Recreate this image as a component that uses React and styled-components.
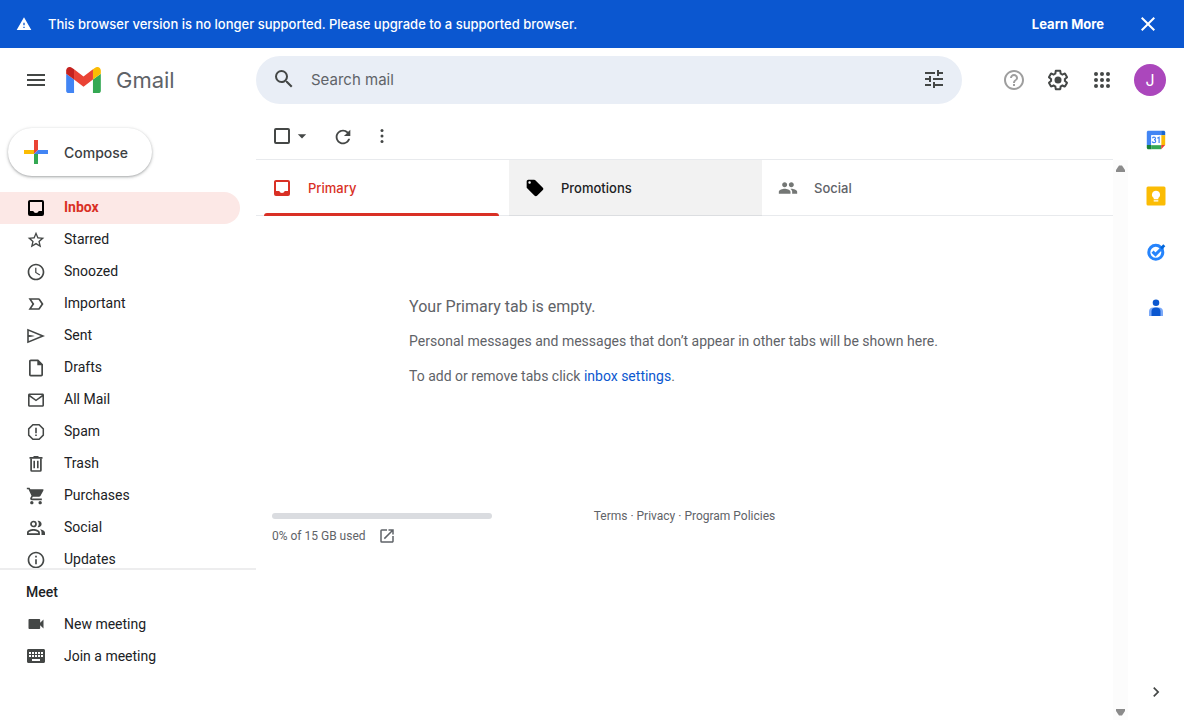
import React from "react";
import styled, { createGlobalStyle, css } from "styled-components";
import {
  MdMenu,
  MdSearch,
  MdTune,
  MdHelpOutline,
  MdClose,
  MdWarning,
  MdRefresh,
  MdArrowDropDown,
  MdStarOutline,
  MdSchedule,
  MdLabelImportantOutline,
  MdShoppingCart,
  MdPeople,
  MdInfoOutline,
  MdVideocam,
  MdLocalOffer,
  MdOpenInNew,
  MdChevronRight,
} from "react-icons/md";

const GlobalStyle = createGlobalStyle`
  *, *::before, *::after { box-sizing: border-box; }
  body {
    margin: 0;
    background: #fff;
    color: #202124;
    font-family: Roboto, "Liberation Sans", sans-serif;
    font-size: 14px;
  }
  button, input { font: inherit; color: inherit; }
  button { padding: 0; border: 0; background: none; cursor: pointer; }
  a { color: inherit; text-decoration: none; }
  svg { display: block; flex: none; }
`;

const display = `Inter, "Open Sans", sans-serif`;

const Page = styled.div`
  display: flex;
  flex-direction: column;
  height: 100vh;
  overflow: hidden;
`;

const Banner = styled.div`
  display: flex;
  align-items: center;
  flex: none;
  height: 48px;
  padding: 0 24px 0 16px;
  gap: 16px;
  background: #0b57d0;
  color: #fff;
  font-family: ${display};
  font-weight: 500;
  font-size: 13px;
`;

const BannerText = styled.span`
  flex: 1;
`;

const BannerLink = styled.a`
  margin-right: 16px;
  font-weight: 700;
`;

const IconButton = styled.button`
  display: grid;
  place-items: center;
  width: ${(p) => p.$size || 24}px;
  height: ${(p) => p.$size || 24}px;
  color: ${(p) => p.$color || "#444746"};
`;

const Header = styled.header`
  display: flex;
  align-items: center;
  flex: none;
  height: 64px;
  padding-right: 18px;
`;

const Brand = styled.div`
  display: flex;
  align-items: center;
  flex: none;
  width: 256px;
  padding-left: 24px;
`;

const BrandLink = styled.a`
  display: flex;
  align-items: center;
  gap: 15px;
  margin-left: 18px;
  color: #5f6368;
  font-family: ${display};
  font-size: 22px;
`;

const SearchBox = styled.form`
  display: flex;
  align-items: center;
  flex: 0 1 706px;
  height: 48px;
  padding: 0 16px 2px;
  gap: 15px;
  border-radius: 24px;
  background: #e9eef6;
`;

const SearchInput = styled.input`
  flex: 1;
  min-width: 0;
  padding: 0;
  border: 0;
  outline: 0;
  background: none;
  font-family: ${display};
  font-size: 15px;
  &::placeholder { color: #5f6368; opacity: 1; }
`;

const HeaderActions = styled.div`
  display: flex;
  align-items: center;
  gap: 20px;
  margin-left: auto;
`;

const Avatar = styled.button`
  width: 32px;
  height: 32px;
  border-radius: 50%;
  background: #ab47bc;
  color: #fff;
  font-family: ${display};
  font-size: 16px;
`;

const Body = styled.div`
  display: flex;
  flex: 1;
  min-height: 0;
`;

const Sidebar = styled.aside`
  display: flex;
  flex-direction: column;
  flex: none;
  width: 256px;
`;

const ComposeButton = styled.button`
  display: flex;
  align-items: center;
  align-self: flex-start;
  flex: none;
  gap: 16px;
  height: 48px;
  margin: 16px 8px;
  padding: 0 24px 0 16px;
  border-radius: 24px;
  background: #fff;
  box-shadow: 0 1px 2px rgba(60, 64, 67, 0.3), 0 1px 3px 1px rgba(60, 64, 67, 0.15);
  color: #3c4043;
  font-family: ${display};
  font-weight: 500;
`;

const FolderNav = styled.nav`
  flex: 1;
  min-height: 0;
  overflow: hidden;
`;

const NavLink = styled.a`
  display: flex;
  align-items: center;
  gap: 18px;
  height: 32px;
  margin-right: 16px;
  padding-left: 26px;
  border-radius: 0 16px 16px 0;
  color: #444746;
  ${(p) =>
    p.$active &&
    css`
      background: #fce8e6;
      color: #000;
      font-weight: 700;
    `}
`;

const NavLabel = styled.span`
  padding-bottom: ${(p) => (p.$centered ? 0 : 2)}px;
  color: ${(p) => (p.$active ? "#d93025" : "#202124")};
`;

const MeetSection = styled.section`
  flex: none;
  padding: 6px 0 48px;
  border-top: 2px solid #ededee;
`;

const MeetTitle = styled.h2`
  margin: 0;
  padding-left: 26px;
  font-size: 14px;
  font-weight: 500;
  line-height: 32px;
`;

const Main = styled.main`
  display: flex;
  flex-direction: column;
  flex: 1;
  min-width: 0;
`;

const Toolbar = styled.div`
  display: flex;
  align-items: center;
  flex: none;
  height: 47px;
  padding-left: 18px;
`;

const SelectAll = styled.input`
  appearance: none;
  width: 16px;
  height: 16px;
  margin: 0;
  border: 2px solid #444746;
  border-radius: 2px;
`;

const ToolbarGroup = styled.div`
  display: flex;
  align-items: center;
  gap: ${(p) => p.$gap}px;
  margin-right: 20px;
`;

const Scroller = styled.div`
  display: flex;
  flex: 1;
  min-height: 0;
`;

const Content = styled.div`
  flex: 1;
  min-width: 0;
`;

const Tabs = styled.div`
  display: flex;
  height: 57px;
  border: solid #e8eaed;
  border-width: 1px 0;
`;

const tabColors = { active: "#d93025", hover: "#000", idle: "#747775" };
const tabTextColors = { active: "#d93025", hover: "#202124", idle: "#5f6368" };

const Tab = styled.button`
  position: relative;
  display: flex;
  align-items: center;
  flex: 0 1 253px;
  gap: 16px;
  height: 56px;
  padding: 0 16px;
  color: ${(p) => tabColors[p.$state]};
  font-family: ${display};
  font-weight: 500;
  font-size: 13px;
  ${(p) => p.$state === "hover" && css`background: rgba(32, 33, 36, 0.06);`}
  ${(p) =>
    p.$state === "active" &&
    css`
      &::after {
        content: "";
        position: absolute;
        left: 8px;
        right: 10px;
        bottom: 0;
        height: 3px;
        border-radius: 3px 3px 0 0;
        background: #d93025;
      }
    `}
`;

const TabLabel = styled.span`
  color: ${(p) => tabTextColors[p.$state]};
`;

const EmptyState = styled.section`
  display: flex;
  justify-content: center;
  padding: 73px 22px 114px 0;
  color: #5f6368;
`;

const EmptyLine = styled.p`
  margin: 0;
  line-height: 35px;
  font-size: ${(p) => (p.$lead ? 16 : 14)}px;
`;

const SettingsLink = styled.a`
  color: #0b57d0;
`;

const Footer = styled.footer`
  display: grid;
  grid-template-columns: 1fr 1fr 1fr;
  padding: 0 16px;
  color: #5f6368;
  font-size: 12px;
`;

const Storage = styled.div`
  display: flex;
  flex-direction: column;
  gap: 8px;
  padding-top: 5px;
`;

const StorageBar = styled.div`
  width: 220px;
  height: 6px;
  border-radius: 3px;
  background: #dadce0;
`;

const StorageText = styled.a`
  display: flex;
  align-items: center;
  gap: 12px;
`;

const Policies = styled.div`
  line-height: 16px;
  text-align: center;
`;

const ScrollTrack = styled.div`
  display: flex;
  flex-direction: column;
  justify-content: space-between;
  align-items: center;
  flex: none;
  width: 15px;
  margin-top: 1px;
  padding: 5px 0 4px;
  background: #fcfcfc;
`;

const SidePanel = styled.aside`
  display: flex;
  flex-direction: column;
  align-items: center;
  flex: none;
  width: 56px;
  padding: 18px 0;
  gap: 36px;
`;

const PanelToggle = styled(IconButton)`
  margin-top: auto;
`;

const Svg20 = ({ children, size = 20 }) => (
  <svg width={size} height={size} viewBox="0 0 20 20" fill="currentColor" aria-hidden="true">
    {children}
  </svg>
);

const InboxIcon = () => (
  <Svg20>
    <path
      fillRule="evenodd"
      d="M4 2h12a2 2 0 0 1 2 2v12a2 2 0 0 1-2 2H4a2 2 0 0 1-2-2V4c0-1.100.9-2 2-2zm0 2v9h3.300c.4 1.200 1.400 2 2.700 2s2.300-.8 2.700-2H16V4z"
    />
  </Svg20>
);
const SentIcon = () => (
  <Svg20>
    <path fillRule="evenodd" d="M1.200 2.700 19 10 1.200 17.300zM2.800 5.100v3.800L8.600 10l-5.800 1.100v3.800L14.800 10z" />
    <path d="M2 9.200 9 10l-7 .8z" />
  </Svg20>
);
const DraftIcon = () => (
  <Svg20>
    <path
      fillRule="evenodd"
      d="M4.800 1.500h7.400L17 6.300v10.400a1.800 1.800 0 0 1-1.800 1.800H4.800A1.800 1.800 0 0 1 3 16.700V3.300c0-1 .8-1.800 1.800-1.800zm-.1 1.700v13.600h10.600V7.200h-4V3.200z"
    />
  </Svg20>
);
const MailIcon = () => (
  <Svg20>
    <path
      fillRule="evenodd"
      d="M3.500 3.500h13c.9 0 1.500.7 1.500 1.500v10.300c0 .8-.6 1.500-1.500 1.500h-13c-.9 0-1.500-.7-1.500-1.500V5c0-.8.6-1.500 1.500-1.500zM3.600 6.700v8.500h12.800V6.700L10 11.300zM4 5.100l6 4.300 6-4.300z"
    />
  </Svg20>
);
const SpamIcon = () => (
  <Svg20>
    <path d="M6.900 2.700h6.200l4.200 4.200v6.200l-4.200 4.200H6.900l-4.200-4.200V6.900z" fill="none" stroke="currentColor" strokeWidth="1.500" />
    <path d="M9.200 5.800h1.600v5.400H9.200zM9.200 12.500h1.600v1.600H9.200z" />
  </Svg20>
);
const TrashIcon = () => (
  <Svg20>
    <path d="M7.500 2h5v1h4v1.700h-13V3h4z" />
    <path d="M5.100 4.500v11.700c0 .5.300.8.800.8h8.200c.5 0 .8-.3.8-.8V4.500" fill="none" stroke="currentColor" strokeWidth="1.700" />
    <path d="M7.400 6.700H9v7.600H7.400zM11 6.700h1.600v7.600H11z" />
  </Svg20>
);
const GroupIcon = () => (
  <Svg20>
    <circle cx="7.500" cy="6" r="2.500" fill="none" stroke="currentColor" strokeWidth="1.700" />
    <path d="M11.500 2.800a3.300 3.300 0 1 1 0 6.400 5 5 0 0 0 0-6.400zM14 11.200c2.700.4 5 1.600 5 3.500V17h-3.500v-2.500c0-1.300-.6-2.400-1.500-3.300z" />
    <path fillRule="evenodd" d="M1 17v-2.300c0-2.400 3.600-3.700 6.500-3.700s6.400 1.300 6.400 3.700V17zm1.700-1.700h9.500v-.6c0-.9-2.200-2-4.700-2s-4.800 1.100-4.800 2z" />
  </Svg20>
);
const KeyboardIcon = () => (
  <Svg20>
    <path
      fillRule="evenodd"
      d="M2.500 3h15c.9 0 1.500.7 1.500 1.500v11c0 .8-.6 1.500-1.500 1.500h-15c-.9 0-1.500-.7-1.500-1.500v-11C1 3.700 1.600 3 2.500 3zM3 6v2h2V6zm3 0v2h2V6zm3 0v2h2V6zm3 0v2h2V6zm3 0v2h2V6zM3 9v2h2V9zm3 0v2h2V9zm3 0v2h2V9zm3 0v2h2V9zm3 0v2h2V9zM6 13v2h8v-2z"
    />
  </Svg20>
);
const MoreIcon = () => (
  <Svg20>
    <circle cx="10" cy="4.500" r="1.500" />
    <circle cx="10" cy="10" r="1.500" />
    <circle cx="10" cy="15.500" r="1.500" />
  </Svg20>
);
const AppsIcon = () => (
  <svg width="24" height="24" viewBox="0 0 24 24" fill="currentColor" aria-hidden="true">
    {[6, 12, 18].map((y) => [6, 12, 18].map((x) => <circle key={`${x}-${y}`} cx={x} cy={y} r="2" />))}
  </svg>
);
const SettingsIcon = () => (
  <svg width="24" height="24" viewBox="0 0 24 24" fill="currentColor" aria-hidden="true">
    <path d="M13.85 22.25h-3.700c-.74 0-1.360-.54-1.450-1.270l-.27-1.890c-.27-.14-.53-.29-.79-.46l-1.800.72c-.7.26-1.470-.03-1.810-.65L2.200 15.530c-.35-.66-.2-1.440.36-1.880l1.530-1.190c-.01-.15-.02-.3-.02-.46 0-.15.01-.31.02-.46l-1.520-1.190c-.59-.45-.74-1.260-.37-1.880l1.850-3.190c.34-.62 1.110-.9 1.790-.63l1.810.73c.26-.17.52-.32.78-.46l.27-1.910c.09-.7.71-1.250 1.440-1.250h3.700c.74 0 1.360.54 1.450 1.270l.27 1.890c.27.14.53.29.79.46l1.800-.72c.71-.26 1.480.03 1.820.65l1.840 3.180c.36.66.2 1.440-.36 1.880l-1.520 1.190c.01.15.02.3.02.46s-.01.31-.02.46l1.520 1.190c.56.45.72 1.230.37 1.860l-1.860 3.220c-.34.62-1.110.9-1.800.63l-1.800-.72c-.26.17-.52.32-.78.46l-.27 1.910c-.1.68-.72 1.220-1.460 1.220zm-3.230-2h2.760l.37-2.550.53-.22c.44-.18.88-.44 1.340-.78l.45-.34 2.380.96 1.380-2.400-2.030-1.580.07-.56c.03-.26.06-.51.06-.78s-.03-.53-.06-.78l-.07-.56 2.030-1.580-1.390-2.400-2.390.96-.45-.35c-.42-.32-.87-.58-1.330-.77l-.52-.22-.37-2.550h-2.760l-.37 2.550-.53.21c-.44.19-.88.44-1.340.79l-.45.33-2.380-.95-1.390 2.390 2.030 1.580-.07.56a7 7 0 0 0-.06.79c0 .26.02.53.06.78l.07.56-2.030 1.580 1.380 2.400 2.390-.96.45.35c.43.33.86.58 1.330.77l.53.22z" />
    <circle cx="12" cy="12" r="3.500" />
  </svg>
);

const GmailLogo = () => (
  <svg width="35" height="26" viewBox="52 42 88 66" aria-hidden="true">
    <path fill="#4285f4" d="M58 108h14V74L52 59v43c0 3.320 2.690 6 6 6" />
    <path fill="#34a853" d="M120 108h14c3.320 0 6-2.690 6-6V59l-20 15" />
    <path fill="#fbbc04" d="M120 48v26l20-15v-8c0-7.420-8.470-11.650-14.400-7.200" />
    <path fill="#ea4335" d="M72 74V48l24 18 24-18v26L96 92" />
    <path fill="#c5221f" d="M52 51v8l20 15V48l-5.600-4.200c-5.940-4.450-14.400-.22-14.400 7.200" />
  </svg>
);
const PlusLogo = () => (
  <svg width="24" height="24" viewBox="0 0 24 24" aria-hidden="true">
    <path fill="#ea4335" d="M10 0h4v10l-4 4z" />
    <path fill="#4285f4" d="M14 10h10v4H10z" />
    <path fill="#34a853" d="M10 14h4v10h-4z" />
    <path fill="#fbbc04" d="M0 10h10v4H0z" />
  </svg>
);
const CalendarLogo = () => (
  <svg width="20" height="20" viewBox="0 0 20 20" aria-hidden="true">
    <path fill="#4285f4" d="M2.300.8h12.900v4.400H5.300v9.900H.8V2.300C.8 1.500 1.500.8 2.300.8z" />
    <path fill="#1967d2" d="M15.200.8h2.500c.8 0 1.500.7 1.500 1.500v2.900h-4z" />
    <path fill="#fbbc04" d="M15.200 5.200h4v9.900h-4z" />
    <path fill="#34a853" d="M5.300 15.100h9.900v4.100H5.300z" />
    <path fill="#188038" d="M.8 15.100h4.500v4.100h-3c-.8 0-1.500-.7-1.500-1.500z" />
    <path fill="#ea4335" d="M15.200 15.100h4l-4 4.100z" />
    <path fill="#fff" d="M5.300 5.200h9.900v9.900H5.300z" />
    <path
      fill="none"
      stroke="#4285f4"
      strokeWidth="1.200"
      d="M6.400 8.200c.3-.8.9-1.100 1.600-1.100.9 0 1.500.5 1.500 1.300S8.900 9.700 8 9.700c1 0 1.700.5 1.700 1.500 0 .9-.7 1.500-1.700 1.500-.9 0-1.500-.4-1.800-1.200M11.300 8.300l1.800-1.100v5.900"
    />
  </svg>
);
const KeepLogo = () => (
  <svg width="20" height="20" viewBox="0 0 20 20" aria-hidden="true">
    <rect x=".5" y=".5" width="19" height="19" rx="1.500" fill="#fbbc04" />
    <path fill="#fff" d="M10 4.800a4 4 0 0 0-2.300 7.300v1.100h4.600v-1.100A4 4 0 0 0 10 4.800zM7.700 14.200h4.600v1.400H7.700z" />
  </svg>
);
const TasksLogo = () => (
  <svg width="20" height="20" viewBox="0 0 20 20" aria-hidden="true">
    <circle cx="9.800" cy="10.300" r="7" fill="none" stroke="#2684fc" strokeWidth="3" />
    <path d="m6.500 9.600 3 3L17 5" fill="none" stroke="#2684fc" strokeWidth="3" />
    <path d="M14.200 5.600 17.300 2.300 19.300 4.300 16 7.600z" fill="#0066da" />
  </svg>
);
const ContactsLogo = () => (
  <svg width="20" height="20" viewBox="0 0 20 20" aria-hidden="true">
    <circle cx="10" cy="4.800" r="3.300" fill="#0b57d0" />
    <path fill="#7ba9f8" d="M3 18v-4.500C3 11 4.800 9.500 7 9.500h6c2.200 0 4 1.500 4 4V18z" />
    <path fill="#0b57d0" d="M5.500 18v-4.500c0-2.500 1.500-4 4.500-4s4.500 1.500 4.500 4V18z" />
  </svg>
);

const folders = [
  { label: "Inbox", icon: <InboxIcon />, active: true },
  { label: "Starred", icon: <MdStarOutline size={20} /> },
  { label: "Snoozed", icon: <MdSchedule size={20} /> },
  { label: "Important", icon: <MdLabelImportantOutline size={20} /> },
  { label: "Sent", icon: <SentIcon /> },
  { label: "Drafts", icon: <DraftIcon /> },
  { label: "All Mail", icon: <MailIcon /> },
  { label: "Spam", icon: <SpamIcon /> },
  { label: "Trash", icon: <TrashIcon /> },
  { label: "Purchases", icon: <MdShoppingCart size={20} /> },
  { label: "Social", icon: <GroupIcon /> },
  { label: "Updates", icon: <MdInfoOutline size={20} /> },
];

const meetLinks = [
  { label: "New meeting", icon: <MdVideocam size={20} /> },
  { label: "Join a meeting", icon: <KeyboardIcon /> },
];

const tabs = [
  { label: "Primary", state: "active", icon: <InboxIcon /> },
  { label: "Promotions", state: "hover", icon: <MdLocalOffer size={20} /> },
  { label: "Social", state: "idle", icon: <MdPeople size={20} /> },
];

const NavItem = ({ label, icon, active, centered }) => (
  <NavLink href="#" $active={active}>
    {icon}
    <NavLabel $active={active} $centered={centered}>
      {label}
    </NavLabel>
  </NavLink>
);

export default function App() {
  return (
    <Page>
      <GlobalStyle />
      <Banner role="alert">
        <MdWarning size={16} />
        <BannerText>This browser version is no longer supported. Please upgrade to a supported browser.</BannerText>
        <BannerLink href="#">Learn More</BannerLink>
        <IconButton aria-label="Dismiss" $color="#fff">
          <MdClose size={24} />
        </IconButton>
      </Banner>

      <Header>
        <Brand>
          <IconButton aria-label="Main menu">
            <MdMenu size={24} />
          </IconButton>
          <BrandLink href="#">
            <GmailLogo />
            Gmail
          </BrandLink>
        </Brand>
        <SearchBox role="search">
          <IconButton type="button" aria-label="Search">
            <MdSearch size={24} />
          </IconButton>
          <SearchInput type="text" aria-label="Search mail" placeholder="Search mail" />
          <IconButton type="button" aria-label="Search options">
            <MdTune size={24} />
          </IconButton>
        </SearchBox>
        <HeaderActions>
          <IconButton aria-label="Support" $color="#9e9e9e">
            <MdHelpOutline size={24} />
          </IconButton>
          <IconButton aria-label="Settings">
            <SettingsIcon />
          </IconButton>
          <IconButton aria-label="Apps">
            <AppsIcon />
          </IconButton>
          <Avatar aria-label="Account">J</Avatar>
        </HeaderActions>
      </Header>

      <Body>
        <Sidebar>
          <ComposeButton>
            <PlusLogo />
            Compose
          </ComposeButton>
          <FolderNav>
            {folders.map((f) => (
              <NavItem key={f.label} {...f} />
            ))}
          </FolderNav>
          <MeetSection>
            <MeetTitle>Meet</MeetTitle>
            {meetLinks.map((m) => (
              <NavItem key={m.label} {...m} centered />
            ))}
          </MeetSection>
        </Sidebar>

        <Main>
          <Toolbar>
            <ToolbarGroup $gap={2}>
              <SelectAll type="checkbox" aria-label="Select all" />
              <IconButton aria-label="Select options" $size={20}>
                <MdArrowDropDown size={20} />
              </IconButton>
            </ToolbarGroup>
            <ToolbarGroup $gap={20}>
              <IconButton aria-label="Refresh" $size={20}>
                <MdRefresh size={22} />
              </IconButton>
              <IconButton aria-label="More" $size={20}>
                <MoreIcon />
              </IconButton>
            </ToolbarGroup>
          </Toolbar>
          <Scroller>
            <Content>
              <Tabs role="tablist">
                {tabs.map((t) => (
                  <Tab key={t.label} role="tab" aria-selected={t.state === "active"} $state={t.state}>
                    {t.icon}
                    <TabLabel $state={t.state}>{t.label}</TabLabel>
                  </Tab>
                ))}
              </Tabs>
              <EmptyState>
                <div>
                  <EmptyLine $lead>Your Primary tab is empty.</EmptyLine>
                  <EmptyLine>Personal messages and messages that don’t appear in other tabs will be shown here.</EmptyLine>
                  <EmptyLine>
                    To add or remove tabs click <SettingsLink href="#">inbox settings</SettingsLink>.
                  </EmptyLine>
                </div>
              </EmptyState>
              <Footer>
                <Storage>
                  <StorageBar />
                  <StorageText href="#">
                    0% of 15 GB used
                    <MdOpenInNew size={18} />
                  </StorageText>
                </Storage>
                <Policies>
                  <a href="#">Terms</a> · <a href="#">Privacy</a> · <a href="#">Program Policies</a>
                </Policies>
              </Footer>
            </Content>
            <ScrollTrack>
              <svg width="9" height="7" viewBox="0 0 9 7" aria-hidden="true">
                <path fill="#8b8b8b" d="M0 7V5l3-4.500h3L9 5v2z" />
              </svg>
              <svg width="9" height="7" viewBox="0 0 9 7" aria-hidden="true">
                <path fill="#8b8b8b" d="M0 0v2l3 4.500h3L9 2V0z" />
              </svg>
            </ScrollTrack>
          </Scroller>
        </Main>

        <SidePanel>
          <IconButton aria-label="Calendar" $size={20}>
            <CalendarLogo />
          </IconButton>
          <IconButton aria-label="Keep" $size={20}>
            <KeepLogo />
          </IconButton>
          <IconButton aria-label="Tasks" $size={20}>
            <TasksLogo />
          </IconButton>
          <IconButton aria-label="Contacts" $size={20}>
            <ContactsLogo />
          </IconButton>
          <PanelToggle aria-label="Hide side panel" $size={20}>
            <MdChevronRight size={20} />
          </PanelToggle>
        </SidePanel>
      </Body>
    </Page>
  );
}
